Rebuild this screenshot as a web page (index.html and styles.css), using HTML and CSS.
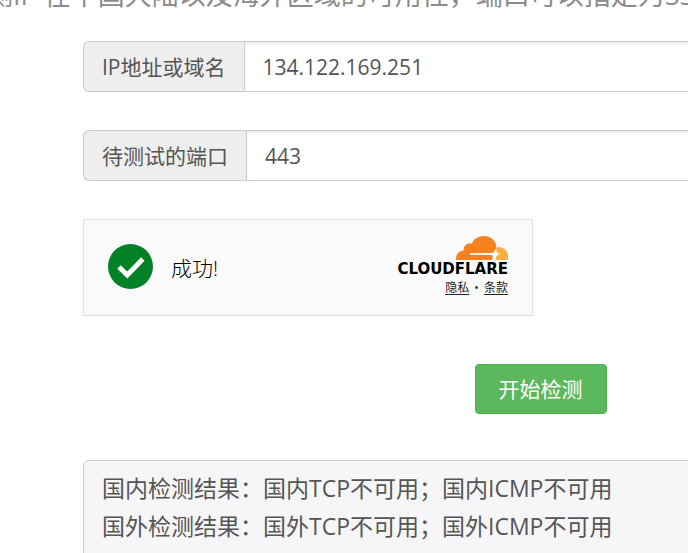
FILE: index.html
```
<!DOCTYPE html>
<html lang="zh-CN">
<head>
    <meta charset="UTF-8">
    <meta name="viewport" content="width=device-width, initial-scale=1.0">
    <title>IP可用性检测</title>
    <link rel="stylesheet" href="styles.css">
</head>
<body>

    <p class="lead">测IP 在中国大陆以及海外区域的可用性，端口可以指定为SSH</p>

    <div class="container">
        <form class="check-form">
            <div class="input-group">
                <label class="addon" for="host">IP地址或域名</label>
                <input class="form-control" type="text" id="host" value="134.122.169.251">
            </div>

            <div class="input-group">
                <label class="addon" for="port">待测试的端口</label>
                <input class="form-control" type="text" id="port" value="443">
            </div>

            <!-- CAPTCHA -->
            <div class="turnstile">
                <div class="status">
                    <svg class="status-icon" viewBox="0 0 45 45" aria-hidden="true">
                        <circle cx="22.5" cy="22.5" r="22.5" fill="#038127"/>
                        <path d="M11 23 L19.3 31 L34.8 15" fill="none" stroke="#fff" stroke-width="4.8"/>
                    </svg>
                    <span class="status-text">成功!</span>
                </div>
                <div class="brand">
                    <svg class="brand-cloud" viewBox="0 0 52 24" aria-hidden="true">
                        <path fill="#f6821f" d="M0 24 C-.4 18.5 2.8 14.6 7.7 14.5 C7.1 9.8 11.1 6.3 15.6 7.9 C17.5 3 22.6 0 28.2 0 C34 0 39 3.8 40.3 9.5 L39.5 18 L36 24 Z"/>
                        <path fill="#fbad41" d="M40.8 11 C47.4 10.4 52 14.8 52 20.5 L51.6 24 L37 24 L39.5 18 Z"/>
                        <path fill="#fff" d="M14 17.3 L36.5 17 C38.3 16.2 38.9 14.5 39.3 12.5 C39.9 15.6 41 17.1 44.3 18 C41.2 18.8 39.9 20.5 39.3 24 L36.2 24 C37 21.8 37 20 35.8 19 L14 18.8 Z"/>
                    </svg>
                    <span class="brand-name">CLOUDFLARE</span>
                    <div class="brand-links">
                        <a href="#">隐私</a> <span class="dot">•</span> <a href="#">条款</a>
                    </div>
                </div>
            </div>

            <button class="btn" type="button">开始检测</button>
        </form>

        <div class="result">
            <p>国内检测结果：国内TCP不可用；国内ICMP不可用</p>
            <p>国外检测结果：国外TCP不可用；国外ICMP不可用</p>
        </div>
    </div>

</body>
</html>
```
FILE: styles.css
```
* {
    margin: 0;
    padding: 0;
    box-sizing: border-box;
}

body {
    background: #fff;
    color: #555;
    font-family: "Open Sans", "Noto Sans CJK SC", sans-serif;
    font-size: 21px;
    overflow: hidden;
}

.lead {
    margin: -25px 0 0 -14px;
    color: #8c8c8c;
    font-size: 27px;
    line-height: 40px;
    white-space: nowrap;
}

.container {
    width: 133vw;
    margin: 26px 0 0 83px;
}

.check-form {
    display: flex;
    flex-direction: column;
}

.input-group {
    display: flex;
    height: 51px;
    margin-bottom: 38px;
}

.addon {
    padding: 0 18px;
    background: #eee;
    border: 1px solid #ccc;
    border-right: 0;
    border-radius: 6px 0 0 6px;
    line-height: 50px;
    white-space: nowrap;
}

.form-control {
    flex: 1;
    min-width: 0;
    padding: 0 18px;
    border: 1px solid #ccc;
    border-radius: 0 6px 6px 0;
    box-shadow: inset 0 2px 2px rgba(0, 0, 0, 0.075);
    background: #fff;
    color: #555;
    font: inherit;
}

/* CAPTCHA */
.turnstile {
    display: flex;
    justify-content: space-between;
    align-items: center;
    width: 450px;
    height: 97px;
    padding: 0 24px 2px;
    border: 1px solid #e0e0e0;
    background: #fafafa;
    color: #232323;
}

.status {
    display: flex;
    align-items: center;
    gap: 18px;
}

.status-text {
    color: #000;
    font-weight: 300;
}

.status-icon {
    width: 45px;
    height: 45px;
}

.brand {
    display: flex;
    flex-direction: column;
    align-items: flex-end;
}

.brand-cloud {
    width: 52px;
    height: 24px;
}

.brand-name {
    color: #000;
    font-family: "DejaVu Sans", sans-serif;
    font-size: 15px;
    font-weight: 700;
    line-height: 18px;
}

.brand-links {
    font-size: 12px;
    line-height: 20px;
}

.brand-links a {
    color: #232323;
    text-underline-offset: 2px;
}

.dot { margin: 0 2px; }

.btn {
    align-self: center;
    height: 50px;
    margin: 48px 0 46px;
    padding: 0 23px 2px;
    border: 1px solid #4cae4c;
    border-radius: 4px;
    background: #5cb85c;
    color: #fff;
    font: inherit;
    cursor: pointer;
}

.btn:hover { background: #449d44; }

.result {
    padding: 8px 18px 18px;
    border: 1px solid #ccc;
    border-radius: 6px;
    background: #f6f6f9;
    font-size: 23px;
    line-height: 38px;
}
```
